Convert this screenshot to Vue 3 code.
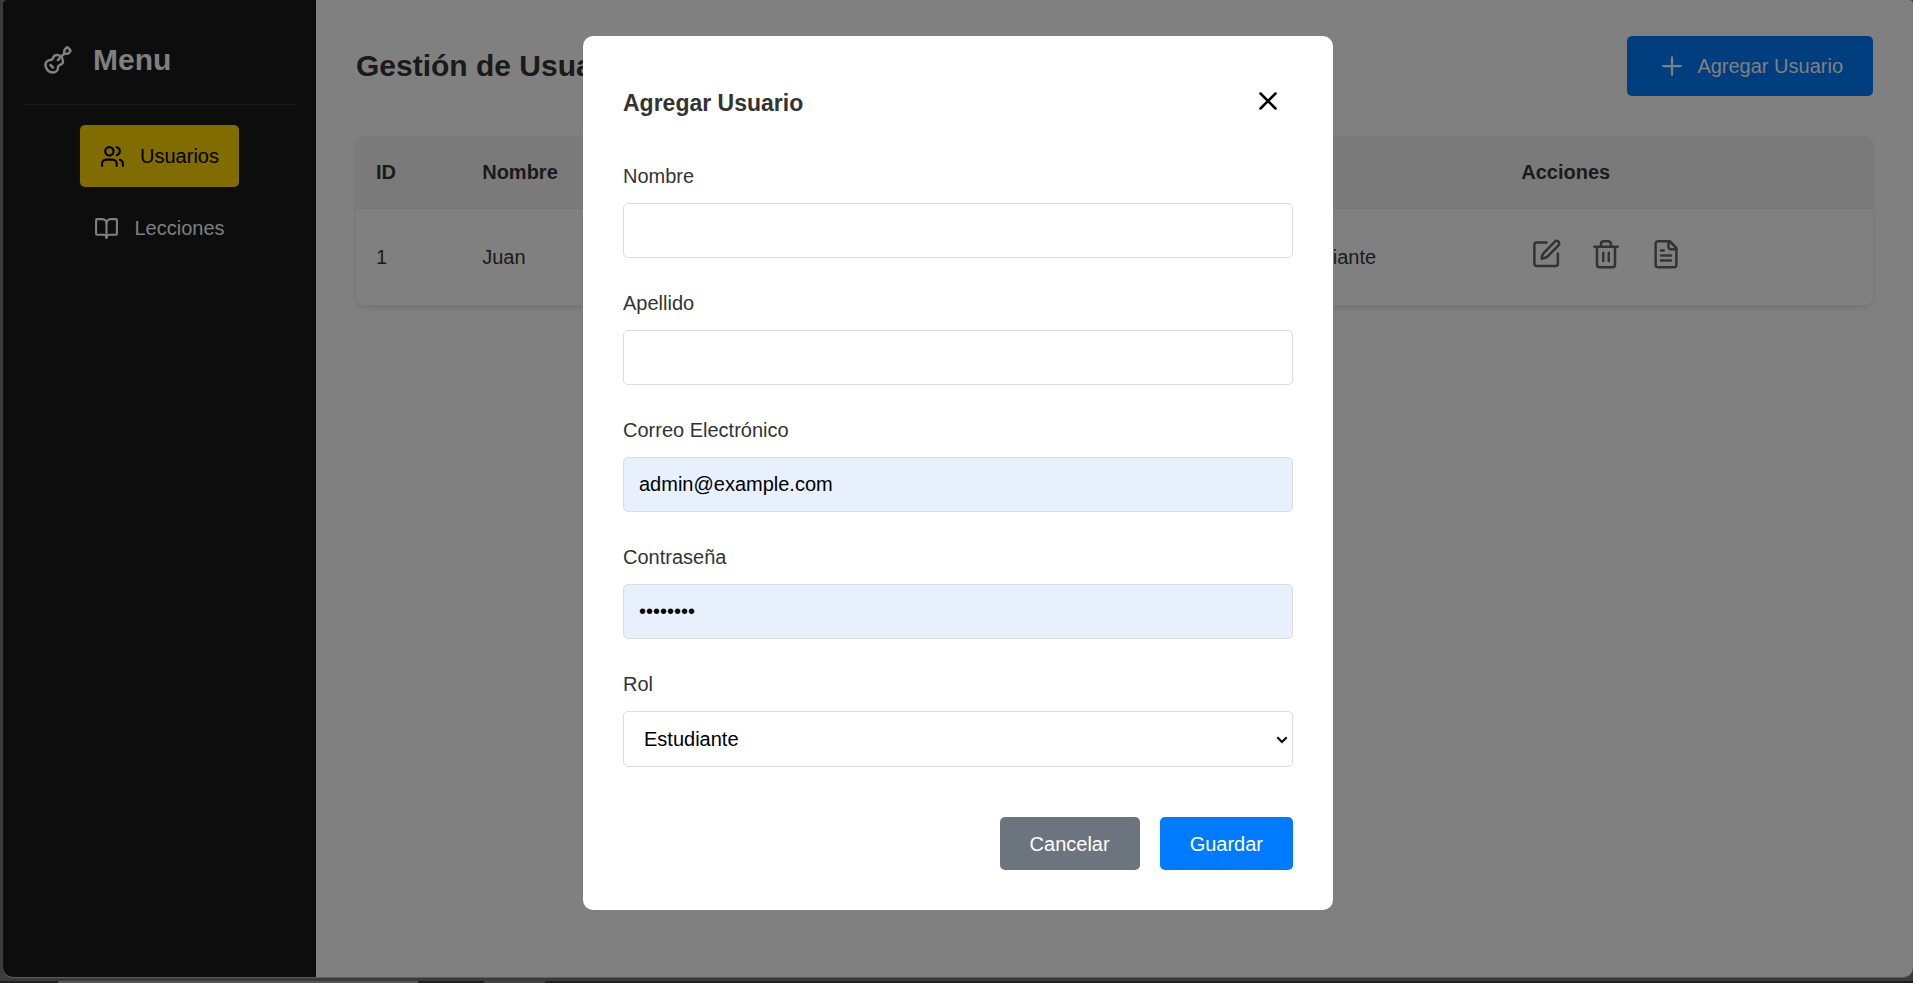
<script setup>
import { ref } from 'vue'

const users = ref([{ id: 1, nombre: 'Juan', apellido: 'Pérez', correo: 'juan@example.com', rol: 'Estudiante' }])
const form = ref({ nombre: '', apellido: '', correo: 'admin@example.com', clave: 'admin123', rol: 'Estudiante' })
const open = ref(true)
</script>

<template>
  <div class="desktop">
    <div class="window">
      <aside class="sidebar">
        <div class="brand">
          <svg class="ic i30" viewBox="0 0 24 24">
            <path d="m11.9 12.1 4.514-4.514" />
            <path d="M20.1 2.3a1 1 0 0 0-1.4 0l-1.114 1.114A2 2 0 0 0 17 4.828v1.344a2 2 0 0 1-.586 1.414A2 2 0 0 1 17.828 7h1.344a2 2 0 0 0 1.414-.586L21.7 5.3a1 1 0 0 0 0-1.4z" />
            <path d="m6 16 2 2" />
            <path d="M8.23 9.85A3 3 0 0 1 11 8a5 5 0 0 1 5 5 3 3 0 0 1-1.85 2.77l-.92.38A2 2 0 0 0 12 18a4 4 0 0 1-4 4 6 6 0 0 1-6-6 4 4 0 0 1 4-4 2 2 0 0 0 1.85-1.23z" />
          </svg>
          <h2>Menu</h2>
        </div>
        <nav>
          <a class="item active" href="#usuarios">
            <svg class="ic i25" viewBox="0 0 24 24">
              <path d="M16 21v-2a4 4 0 0 0-4-4H6a4 4 0 0 0-4 4v2" />
              <circle cx="9" cy="7" r="4" />
              <path d="M22 21v-2a4 4 0 0 0-3-3.87" />
              <path d="M16 3.13a4 4 0 0 1 0 7.75" />
            </svg>
            <span>Usuarios</span>
          </a>
          <a class="item" href="#lecciones">
            <svg class="ic i25" viewBox="0 0 24 24">
              <path d="M12 7v14" />
              <path d="M3 18a1 1 0 0 1-1-1V4a1 1 0 0 1 1-1h5a4 4 0 0 1 4 4 4 4 0 0 1 4-4h5a1 1 0 0 1 1 1v13a1 1 0 0 1-1 1h-6a3 3 0 0 0-3 3 3 3 0 0 0-3-3z" />
            </svg>
            <span>Lecciones</span>
          </a>
        </nav>
      </aside>

      <main class="content">
        <header class="head">
          <h1>Gestión de Usuarios</h1>
          <button class="btn add" type="button" @click="open = true">
            <svg class="ic i30 thin" viewBox="0 0 24 24"><path d="M5 12h14M12 5v14" /></svg>
            <span>Agregar Usuario</span>
          </button>
        </header>
        <table>
          <colgroup>
            <col class="c-id" /><col class="c-name" /><col class="c-last" /><col class="c-mail" /><col class="c-role" /><col />
          </colgroup>
          <thead>
            <tr><th>ID</th><th>Nombre</th><th>Apellido</th><th>Correo</th><th>Rol</th><th>Acciones</th></tr>
          </thead>
          <tbody>
            <tr v-for="u in users" :key="u.id">
              <td>{{ u.id }}</td><td>{{ u.nombre }}</td><td>{{ u.apellido }}</td><td>{{ u.correo }}</td><td>{{ u.rol }}</td>
              <td>
                <div class="actions">
                  <button type="button" aria-label="Editar">
                    <svg class="ic i30" viewBox="0 0 24 24">
                      <path d="M12.5 2.8H4.7a2 2 0 0 0-2 2v14.8a2 2 0 0 0 2 2h14.8a2 2 0 0 0 2-2v-8" />
                      <path d="M19 2.2a2.05 2.05 0 0 1 3 2.9L13.4 13.8c-1.2 1.2-3 2-4.9 2 0-1.9.9-3.8 2-4.9z" />
                    </svg>
                  </button>
                  <button type="button" aria-label="Eliminar">
                    <svg class="ic i30" viewBox="0 0 24 24">
                      <path d="M2.7 6.2h18.6M19.2 6.2v14.3a2 2 0 0 1-2 2H6.8a2 2 0 0 1-2-2V6.2M8 6.2V4a2.2 2.2 0 0 1 2.2-2.2h3.6A2.2 2.2 0 0 1 16 4v2.2M9.8 11v6.5M14.2 11v6.5" />
                    </svg>
                  </button>
                  <button type="button" aria-label="Ver informe">
                    <svg class="ic i30" viewBox="0 0 24 24">
                      <path d="M15 1.8H5.7a2 2 0 0 0-2 2v16.7a2 2 0 0 0 2 2h12.6a2 2 0 0 0 2-2V7.2z" />
                      <path d="M14 1.8v4.4a2 2 0 0 0 2 2h4.3M10.2 9.2H8M16 13.2H8M16 17.2H8" />
                    </svg>
                  </button>
                </div>
              </td>
            </tr>
          </tbody>
        </table>
      </main>
    </div>

    <div class="taskbar"><span class="edge"></span><span class="tab"></span></div>

    <div v-if="open" class="overlay">
      <form class="modal" role="dialog" aria-labelledby="modal-title" @submit.prevent="open = false">
        <div class="modal-head">
          <h3 id="modal-title">Agregar Usuario</h3>
          <button class="close" type="button" aria-label="Cerrar" @click="open = false">
            <svg class="ic i30" viewBox="0 0 24 24"><path d="M18 6 6 18M6 6l12 12" /></svg>
          </button>
        </div>
        <div class="field">
          <label for="nombre">Nombre</label>
          <input id="nombre" v-model="form.nombre" type="text" />
        </div>
        <div class="field">
          <label for="apellido">Apellido</label>
          <input id="apellido" v-model="form.apellido" type="text" />
        </div>
        <div class="field">
          <label for="correo">Correo Electrónico</label>
          <input id="correo" v-model="form.correo" class="filled" type="email" />
        </div>
        <div class="field">
          <label for="clave">Contraseña</label>
          <input id="clave" v-model="form.clave" class="filled" type="password" />
        </div>
        <div class="field">
          <label for="rol">Rol</label>
          <div class="picker">
            <select id="rol" v-model="form.rol">
              <option>Estudiante</option>
              <option>Administrador</option>
            </select>
            <svg class="arrow" viewBox="0 0 12 8"><path d="M1.3 1.3 6 6l4.7-4.7" /></svg>
          </div>
        </div>
        <div class="foot">
          <button class="btn cancel" type="button" @click="open = false">Cancelar</button>
          <button class="btn save" type="submit">Guardar</button>
        </div>
      </form>
    </div>
  </div>
</template>

<style>
html,
body,
#app {
  height: 100%;
}
body {
  margin: 0;
}
</style>

<style scoped>
* {
  box-sizing: border-box;
}
.desktop {
  position: relative;
  display: flex;
  flex-direction: column;
  height: 100%;
  overflow: hidden;
  background: #3b3b3b;
  font-family: Arial, "Liberation Sans", sans-serif;
  font-size: 20px;
  line-height: 24px;
  color: #1a1a1a;
}
.window {
  flex: 1;
  display: flex;
  margin: 0 0 3px 3px;
  overflow: hidden;
  border-radius: 4px 4px 10px 10px;
  border-bottom: 1px solid #5c5c5c;
  background: #808080;
}
.taskbar {
  display: flex;
  height: 2px;
  background: #1f1f1f;
}
.edge {
  width: 360px;
  margin-left: 58px;
  background: #555;
}
.tab {
  width: 61px;
  margin-left: 66px;
  background: #444;
}
h1,
h2,
h3 {
  margin: 0;
}
.ic {
  display: block;
  flex: none;
  fill: none;
  stroke: currentColor;
  stroke-width: 2;
  stroke-linecap: round;
  stroke-linejoin: round;
}
.thin {
  stroke-width: 1.8;
}
.i25 {
  width: 25px;
  height: 25px;
}
.i30 {
  width: 30px;
  height: 30px;
}
.sidebar {
  width: 313px;
  padding: 20px;
  background: #0d0d0d;
  color: #808080;
}
.brand {
  display: flex;
  align-items: center;
  gap: 20px;
  height: 85px;
  padding: 0 20px 5px;
  border-bottom: 1px solid #1a1a1a;
}
.brand h2 {
  font-size: 30px;
  line-height: 36px;
}
nav {
  display: flex;
  flex-direction: column;
  align-items: center;
  gap: 10px;
  padding-top: 20px;
}
.item {
  display: flex;
  align-items: center;
  gap: 15px;
  height: 62px;
  padding: 0 20px;
  border-radius: 5px;
  color: #808080;
  text-decoration: none;
}
.item.active {
  background: #806c00;
  color: #000;
}
.content {
  flex: 1;
  padding: 36px 40px;
}
.head {
  display: flex;
  justify-content: space-between;
  align-items: center;
  margin-bottom: 40px;
}
h1 {
  font-size: 30px;
  line-height: 36px;
}
button {
  border: 0;
  font: inherit;
  cursor: pointer;
}
.btn {
  border-radius: 5px;
  color: #fff;
}
.add {
  display: flex;
  align-items: center;
  gap: 10px;
  height: 60px;
  padding: 0 30px;
  background: #003e80;
  color: #808080;
}
table {
  width: 100%;
  table-layout: fixed;
  border-collapse: separate;
  border-spacing: 0;
  overflow: hidden;
  border-radius: 10px;
  box-shadow: 0 2px 5px rgba(0, 0, 0, 0.1);
}
.c-id { width: 7%; }
.c-name { width: 12%; }
.c-last { width: 14%; }
.c-mail { width: 26.7%; }
.c-role { width: 15.8%; }
th,
td {
  padding: 0 20px;
  text-align: left;
  border-bottom: 1px solid #777;
}
th {
  height: 73px;
  background: #7a7a7a;
}
td {
  height: 97px;
}
.actions {
  display: flex;
  gap: 10px;
  padding-bottom: 6px;
  color: #333;
}
.actions button {
  padding: 10px;
  background: none;
  color: inherit;
}
.overlay {
  position: absolute;
  inset: 0 0 0 3px;
  display: flex;
  justify-content: center;
  align-items: flex-start;
  padding-top: 36px;
}
.modal {
  width: 750px;
  max-width: 100%;
  padding: 40px;
  border-radius: 10px;
  background: #fff;
  color: #333;
}
.modal-head {
  display: flex;
  justify-content: space-between;
  align-items: flex-end;
  margin-bottom: 38px;
}
h3 {
  font-size: 23px;
  line-height: 46px;
}
.close {
  padding: 10px;
  background: none;
  color: #000;
}
.field {
  display: flex;
  flex-direction: column;
  gap: 15px;
  margin-bottom: 33px;
}
.field input,
.field select {
  display: block;
  width: 100%;
  height: 55px;
  padding: 0 15px;
  border: 1px solid #ddd;
  border-radius: 5px;
  background: #fff;
  font: inherit;
  color: #000;
}
.field select {
  height: 56px;
  padding: 0 20px;
  appearance: none;
}
.field .filled {
  background: #e8f0fe;
}
.picker {
  position: relative;
}
.arrow {
  position: absolute;
  right: 5px;
  top: 25px;
  width: 12px;
  height: 8px;
  fill: none;
  stroke: #000;
  stroke-width: 2;
  pointer-events: none;
}
.foot {
  display: flex;
  justify-content: flex-end;
  gap: 20px;
  padding-top: 17px;
}
.foot .btn {
  height: 53px;
  padding: 0 30px;
}
.cancel {
  background: #6c757d;
}
.save {
  background: #007bff;
}
</style>
